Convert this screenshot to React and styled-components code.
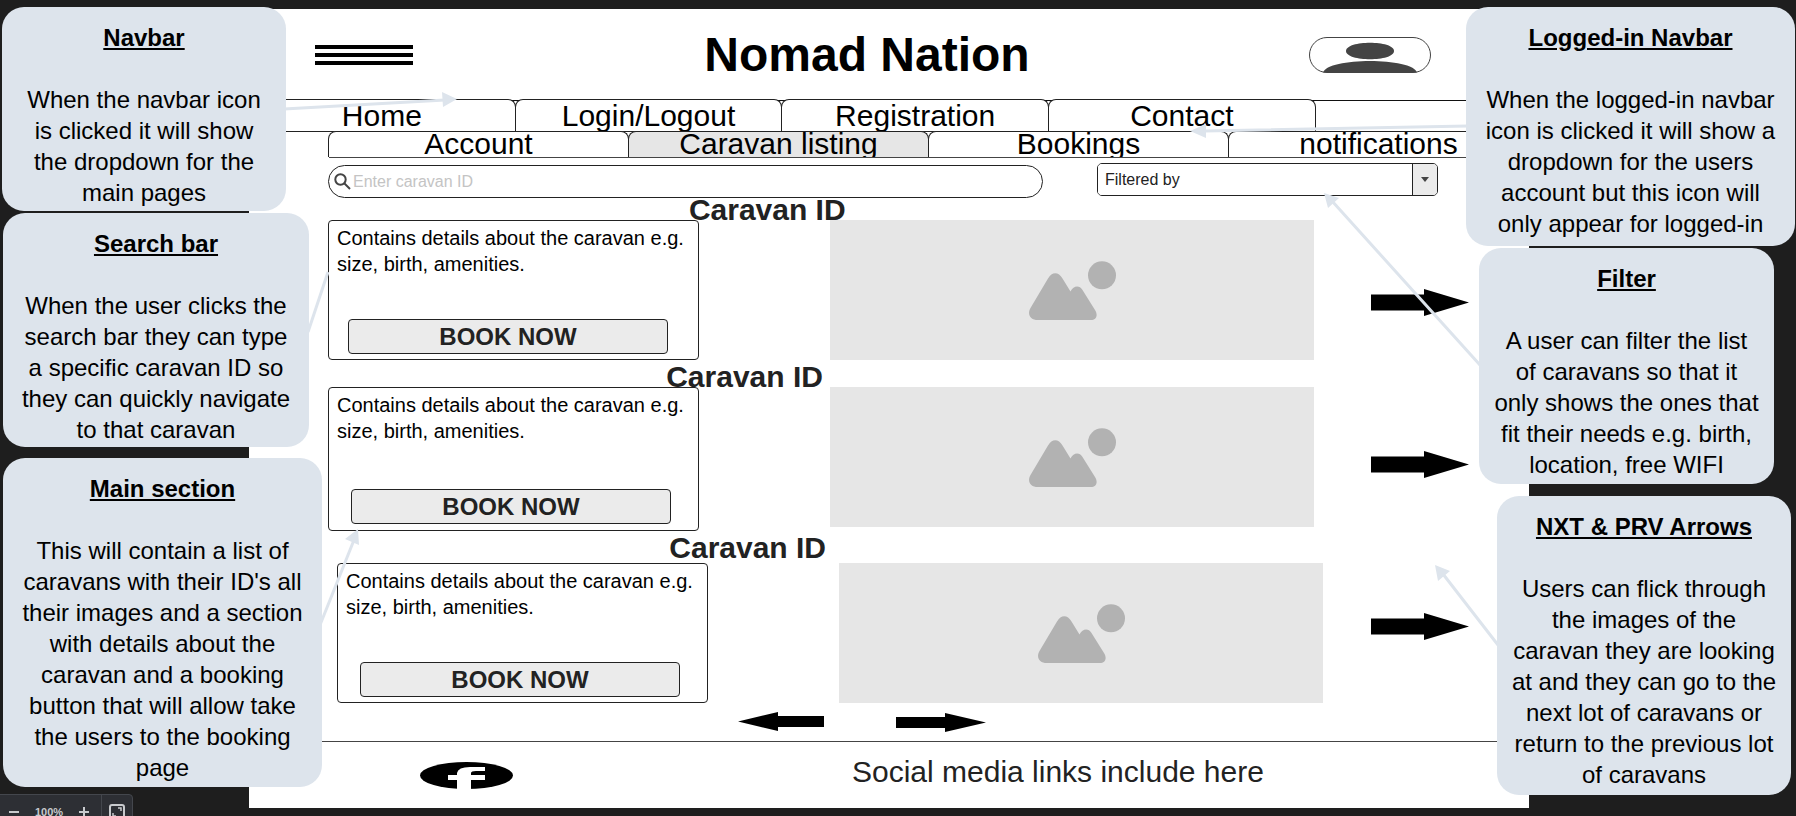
import React from "react";
import styled, { createGlobalStyle } from "styled-components";

const GlobalStyle = createGlobalStyle`
  *, *::before, *::after { box-sizing: border-box; }
  body { margin: 0; background: #1e1e1e; font-family: "Liberation Sans", Arial, sans-serif; color: #000; }
  h1, h2, p { margin: 0; }
  a { color: inherit; text-decoration: none; }
  button, input, select { font-family: inherit; }
  svg { display: block; }
`;

const Canvas = styled.div`
  position: relative;
  min-height: 100vh;
  padding: 9px 267px 8px 249px;
  overflow: hidden;
`;

const Artboard = styled.div`
  background: #fff;
  min-height: 799px;
  display: flex;
  flex-direction: column;
`;

/* Header */
const Header = styled.header`
  display: grid;
  grid-template-columns: 1fr auto 1fr;
  align-items: center;
  height: 90px;
  padding: 2px 98px 0 66px;
`;

const MenuButton = styled.button`
  display: flex;
  flex-direction: column;
  gap: 4px;
  width: 98px;
  padding: 0;
  border: 0;
  background: none;
`;

const MenuBar = styled.span`
  height: 4px;
  background: #000;
`;

const SiteTitle = styled.h1`
  font-size: 48px;
  line-height: 56px;
  padding-right: 12px;
`;

const ProfileButton = styled.button`
  justify-self: end;
  padding: 0;
  border: 0;
  background: none;
`;

/* Navigation */
const NavRow = styled.nav`
  display: grid;
  grid-template-columns: repeat(4, 5fr) 4fr;
  height: 33px;
  background: linear-gradient(#111, #111) 0 1px / 100% 1px no-repeat;
  border-bottom: 1px solid #222;
`;

const SubNavRow = styled.nav`
  display: grid;
  grid-template-columns: repeat(4, 1fr);
  height: 27px;
  margin: -1px 0 6px 80px;
  border-bottom: 1px solid #444;
`;

const Tab = styled.a`
  display: block;
  overflow: hidden;
  margin-left: -1px;
  text-align: center;
  font-size: 30px;
  line-height: ${(p) => (p.$sub ? 24 : 31)}px;
  background: ${(p) => (p.$active ? "#e6e6e6" : "#fff")};
  border: solid #222;
  border-width: 1px 1px 0;
  border-radius: 8px 8px 0 0;
`;

/* Search and filter */
const Tools = styled.div`
  display: grid;
  grid-template-columns: 715fr 54fr 341fr;
  margin: 0 91px 0 79px;
  height: 34px;
`;

const SearchField = styled.label`
  display: flex;
  align-items: center;
  gap: 2px;
  height: 33px;
  margin-top: 1px;
  padding: 0 5px;
  border: 1px solid #222;
  border-radius: 17px;
`;

const SearchInput = styled.input`
  flex: 1;
  min-width: 0;
  padding: 0;
  border: 0;
  outline: 0;
  background: none;
  font-size: 16px;
  &::placeholder { color: #c4c4c4; opacity: 1; }
`;

const FilterField = styled.label`
  grid-column: 3;
  position: relative;
  display: flex;
  height: 33px;
  margin-top: -1px;
  border: 1px solid #222;
  border-radius: 5px;
  overflow: hidden;
`;

const FilterSelect = styled.select`
  appearance: none;
  flex: 1;
  min-width: 0;
  padding: 0 7px;
  border: 0;
  background: #fff;
  color: #222;
  font-size: 16px;
`;

const FilterArrow = styled.span`
  display: grid;
  place-items: center;
  width: 25px;
  border-left: 1px solid #222;
  background: #ebebeb;
  pointer-events: none;
`;

/* Listings */
const Main = styled.main`
  display: grid;
  grid-template-columns: 995fr 48fr 98fr;
  margin: 0 60px 0 79px;
`;

const Listings = styled.div`
  display: flex;
  flex-direction: column;
  gap: 5px;
`;

const Listing = styled.article`
  padding: ${(p) => (p.$inset ? "0 0 0 9px" : "0 9px 0 0")};
`;

const ListingTitle = styled.h2`
  height: ${(p) => (p.$spaced ? 27 : 22)}px;
  padding-left: ${(p) => p.$start};
  color: #222;
  font-size: 30px;
  line-height: 24px;
`;

const ListingBody = styled.div`
  display: grid;
  grid-template-columns: 371fr 131fr 484fr;
  align-items: start;
`;

const Details = styled.div`
  display: flex;
  flex-direction: column;
  height: ${(p) => (p.$tall ? 144 : 140)}px;
  padding: 4px 0 5px 8px;
  border: 1px solid #222;
  border-radius: 4px;
  font-size: 20px;
  line-height: 26px;
`;

const BookButton = styled.button`
  width: 320px;
  height: 35px;
  margin: auto 0 ${(p) => (p.$tall ? 1 : 0)}px ${(p) => p.$indent}px;
  padding: 0;
  border: 1px solid #222;
  border-radius: 4px;
  background: #ebebeb;
  color: #222;
  font-size: 24px;
  font-weight: bold;
  line-height: 30px;
`;

const ImagePlaceholder = styled.div`
  grid-column: 3;
  display: grid;
  place-items: center;
  height: 140px;
  background: #e6e6e6;
`;

const ImageArrows = styled.div`
  grid-column: 3;
  display: flex;
  flex-direction: column;
  gap: 135px;
  padding-top: 91px;
`;

const ArrowButton = styled.button`
  display: block;
  padding: 0;
  border: 0;
  background: none;
`;

const Pager = styled.div`
  display: flex;
  gap: 72px;
  padding: 9px 0 9px 489px;
`;

const Footer = styled.footer`
  display: flex;
  align-items: flex-start;
  flex: 1;
  padding: 13px 0 0 171px;
  gap: 339px;
  border-top: 1px solid #444;
  color: #222;
  font-size: 30px;
  line-height: 34px;
`;

const SocialLink = styled.a`
  padding-top: 7px;
`;

/* Annotations laid over the artboard */
const NoteColumn = styled.aside`
  position: absolute;
  top: 7px;
  ${(p) => (p.$side === "left" ? "left: 2px;" : "right: 1px;")}
  width: 329px;
  display: flex;
  flex-direction: column;
  align-items: flex-start;
`;

const Note = styled.section`
  width: ${(p) => p.$width}px;
  height: ${(p) => p.$height}px;
  margin: ${(p) => p.$margin || "0"};
  padding: 15px ${(p) => p.$pad || 12}px 0;
  border-radius: 22px;
  background: #dde4ec;
  text-align: center;
  font-size: 24px;
  line-height: 31px;
`;

const NoteTitle = styled.h2`
  margin-bottom: 31px;
  font-size: 24px;
  line-height: 31px;
  text-decoration: underline;
`;

const Connectors = styled.svg`
  position: absolute;
  top: 0;
  ${(p) => (p.$side === "left" ? "left: 0;" : "right: 0;")}
  pointer-events: none;
`;

/* Zoom control */
const ZoomBar = styled.div`
  position: absolute;
  left: -4px;
  bottom: -14px;
  display: flex;
  align-items: center;
  width: 137px;
  height: 36px;
  border: 1px solid #44474d;
  border-radius: 4px;
  background: #2d2f34;
  color: #c8cacd;
  font-size: 11px;
  font-weight: bold;
`;

const ZoomButton = styled.button`
  display: grid;
  place-items: center;
  width: ${(p) => p.$width}px;
  height: 34px;
  padding: 0;
  border: 0;
  border-left: ${(p) => (p.$divided ? "1px solid #44474d" : "0")};
  background: none;
  color: inherit;
`;

const ZoomValue = styled.span`
  width: 36px;
  text-align: center;
`;

const SideArrow = () => (
  <svg width="98" height="27" viewBox="0 0 98 27">
    <path d="M0 5.5H53V0L98 13.5L53 27V21.5H0Z" />
  </svg>
);

const PictureIcon = () => (
  <svg width="87" height="59" viewBox="0 0 87 59" fill="#b2b2b2">
    <circle cx="73" cy="14.3" r="14" />
    <path d="M19 17.500C23 10.500 29.500 10.500 33.500 17.500L41.500 30.500C44.500 24.500 50.500 24 53.500 29L66 49C69.500 54.500 67 59 62 59H9C1 59 -2 53 1.500 47Z" />
  </svg>
);

const listings = [
  { start: "36.600%", indent: 11 },
  { start: "34.300%", indent: 14, tall: true },
  { start: "33.700%", indent: 14, inset: true },
];

const NoteCard = ({ title, children, ...rest }) => (
  <Note {...rest}>
    <NoteTitle>{title}</NoteTitle>
    <p>{children}</p>
  </Note>
);

export default function App() {
  return (
    <Canvas>
      <GlobalStyle />
      <Artboard>
        <Header>
          <MenuButton aria-label="Menu">
            <MenuBar />
            <MenuBar />
            <MenuBar />
          </MenuButton>
          <SiteTitle>Nomad Nation</SiteTitle>
          <ProfileButton aria-label="Account">
            <svg width="122" height="36" viewBox="0 0 122 36">
              <rect x="0.5" y="0.5" width="121" height="35" rx="17.5" fill="#fff" stroke="#444" />
              <path d="M37 14C37 3 85 3 85 14S37 25 37 14Z" fill="#444" />
              <path d="M14 35.500C18 20 104 20 108 35.500Z" fill="#444" />
            </svg>
          </ProfileButton>
        </Header>

        <NavRow aria-label="Main">
          <Tab href="#home">Home</Tab>
          <Tab href="#login">Login/Logout</Tab>
          <Tab href="#registration">Registration</Tab>
          <Tab href="#contact">Contact</Tab>
        </NavRow>
        <SubNavRow aria-label="Account">
          <Tab $sub href="#account">Account</Tab>
          <Tab $sub $active href="#listing">Caravan listing</Tab>
          <Tab $sub href="#bookings">Bookings</Tab>
          <Tab $sub href="#notifications">notifications</Tab>
        </SubNavRow>

        <Tools>
          <SearchField aria-label="Search">
            <svg width="17" height="17" viewBox="0 0 17 17" fill="none" stroke="#444" strokeWidth="2">
              <circle cx="6.500" cy="6.500" r="5.200" />
              <path d="M10.500 10.500L16 16" />
            </svg>
            <SearchInput placeholder="Enter caravan ID" />
          </SearchField>
          <FilterField>
            <FilterSelect aria-label="Filter" defaultValue="">
              <option value="">Filtered by</option>
            </FilterSelect>
            <FilterArrow>
              <svg width="8" height="5" viewBox="0 0 8 5"><path d="M0 0H8L4 5Z" fill="#444" /></svg>
            </FilterArrow>
          </FilterField>
        </Tools>

        <Main>
          <Listings>
            {listings.map((item) => (
              <Listing key={item.start} $inset={item.inset}>
                <ListingTitle $start={item.start} $spaced={item.inset}>Caravan ID</ListingTitle>
                <ListingBody>
                  <Details $tall={item.tall}>
                    <p>Contains details about the caravan e.g. size, birth, amenities.</p>
                    <BookButton $indent={item.indent} $tall={item.tall}>BOOK NOW</BookButton>
                  </Details>
                  <ImagePlaceholder role="img" aria-label="Caravan">
                    <PictureIcon />
                  </ImagePlaceholder>
                </ListingBody>
              </Listing>
            ))}
          </Listings>
          <ImageArrows>
            {listings.map((item) => (
              <ArrowButton key={item.start} aria-label="Next image">
                <SideArrow />
              </ArrowButton>
            ))}
          </ImageArrows>
        </Main>

        <Pager>
          <ArrowButton aria-label="Previous caravans">
            <svg width="86" height="20" viewBox="0 0 86 20">
              <path d="M0 9.500L40 0V4H86V15H40V19Z" />
            </svg>
          </ArrowButton>
          <ArrowButton aria-label="Next caravans">
            <svg width="90" height="20" viewBox="0 0 90 20">
              <path d="M90 10.500L49 1V5H0V16H49V20Z" />
            </svg>
          </ArrowButton>
        </Pager>

        <Footer>
          <SocialLink href="#facebook" aria-label="Facebook">
            <svg width="93" height="27" viewBox="0 0 93 27">
              <ellipse cx="46.500" cy="13.500" rx="46.500" ry="13.500" />
              <path d="M37 27V18H28V13H37V11Q38 5 50 5H65V9H56Q51 9 51 11V13H65V18H51V27Z" fill="#fff" />
            </svg>
          </SocialLink>
          <span>Social media links include here</span>
        </Footer>
      </Artboard>

      <Connectors $side="left" width="480" height="640" viewBox="0 0 480 640" fill="#dde4ec" stroke="#dde4ec">
        <path d="M284 109L445 100M308 332L328 272M320 625L354 540" strokeWidth="3" fill="none" />
        <path d="M442 92L457 99L443 107ZM358 529L345 539L359 545Z" stroke="none" />
      </Connectors>
      <Connectors $side="right" width="620" height="660" viewBox="1176 0 620 660" fill="#dde4ec" stroke="#dde4ec">
        <path d="M1468 126L1204 131M1480 365L1332 201M1498 645L1443 574" strokeWidth="3" fill="none" />
        <path d="M1190 131L1206 124V138ZM1324 193L1339 198L1328 208ZM1435 565L1450 571L1438 581Z" stroke="none" />
      </Connectors>

      <NoteColumn $side="left">
        <NoteCard title="Navbar" $width={284} $height={204} $pad={20}>
          When the navbar icon is clicked it will show the dropdown for the main pages
        </NoteCard>
        <NoteCard title="Search bar" $width={306} $height={234} $margin="2px 0 0 1px">
          When the user clicks the search bar they can type a specific caravan ID so they can quickly navigate to that caravan
        </NoteCard>
        <NoteCard title="Main section" $width={319} $height={329} $margin="11px 0 0 1px">
          This will contain a list of caravans with their ID's all their images and a section with details about the caravan and a booking button that will allow take the users to the booking page
        </NoteCard>
      </NoteColumn>

      <NoteColumn $side="right">
        <NoteCard title="Logged-in Navbar" $width={329} $height={239}>
          When the logged-in navbar icon is clicked it will show a dropdown for the users account but this icon will only appear for logged-in
        </NoteCard>
        <NoteCard title="Filter" $width={295} $height={236} $pad={14} $margin="2px 0 0 13px">
          A user can filter the list of caravans so that it only shows the ones that fit their needs e.g. birth, location, free WIFI
        </NoteCard>
        <NoteCard title="NXT & PRV Arrows" $width={294} $height={299} $margin="12px 0 0 31px">
          Users can flick through the images of the caravan they are looking at and they can go to the next lot of caravans or return to the previous lot of caravans
        </NoteCard>
      </NoteColumn>

      <ZoomBar>
        <ZoomButton $width={34} aria-label="Zoom out">
          <svg width="10" height="10" viewBox="0 0 10 10" stroke="currentColor" strokeWidth="2"><path d="M0 5H10" /></svg>
        </ZoomButton>
        <ZoomValue>100%</ZoomValue>
        <ZoomButton $width={34} aria-label="Zoom in">
          <svg width="10" height="10" viewBox="0 0 10 10" stroke="currentColor" strokeWidth="2"><path d="M0 5H10M5 0V10" /></svg>
        </ZoomButton>
        <ZoomButton $width={31} $divided aria-label="Fit to screen">
          <svg width="16" height="16" viewBox="0 0 16 16" fill="none" stroke="currentColor" strokeWidth="2">
            <rect x="1" y="1" width="14" height="14" rx="2" />
            <path d="M9 4H12V7M4 9V12H7" strokeWidth="1.500" />
          </svg>
        </ZoomButton>
      </ZoomBar>
    </Canvas>
  );
}
